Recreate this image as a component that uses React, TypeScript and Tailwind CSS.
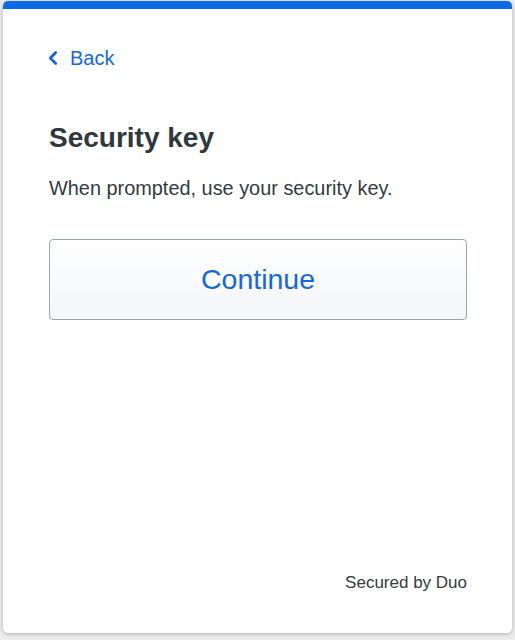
import { ChevronLeft } from 'lucide-react';

export default function App() {
  return (
    <div className="min-h-screen bg-[#ececec] pt-px px-[3px] pb-[7px] font-['Liberation_Sans',Arial,sans-serif]">
      <div className="h-[632px] bg-white rounded-[5px] shadow-[0_1px_4px_rgba(0,0,0,0.25)] overflow-hidden flex flex-col">
        {/* brand strip */}
        <div className="h-2 bg-[#0b6ae6]" />

        <div className="flex-1 flex flex-col pl-[46px] pr-[45px]">
          <button className="mt-[37px] flex items-center gap-[6px] text-[#1467e1] text-[20px] leading-[24px] self-start">
            <ChevronLeft className="w-[22px] h-[22px] -ml-[7px]" strokeWidth={3} />
            <span>Back</span>
          </button>

          <h1 className="mt-[52px] text-[28px] leading-[32px] font-bold text-[#2f383d]">Security key</h1>

          <p className="mt-[22px] text-[19.9px] leading-[24px] text-[#333b40]">
            When prompted, use your security key.
          </p>

          <button className="mt-[39px] h-[81px] w-full rounded-[4px] border border-[#9ea5ae] bg-gradient-to-b from-white to-[#f3f5f8] text-[#1467e1] text-[28.5px]">
            Continue
          </button>

          <div className="mt-auto mb-[40px] self-end text-[17px] leading-[20px] text-[#333b40]">
            Secured by Duo
          </div>
        </div>
      </div>
    </div>
  );
}
